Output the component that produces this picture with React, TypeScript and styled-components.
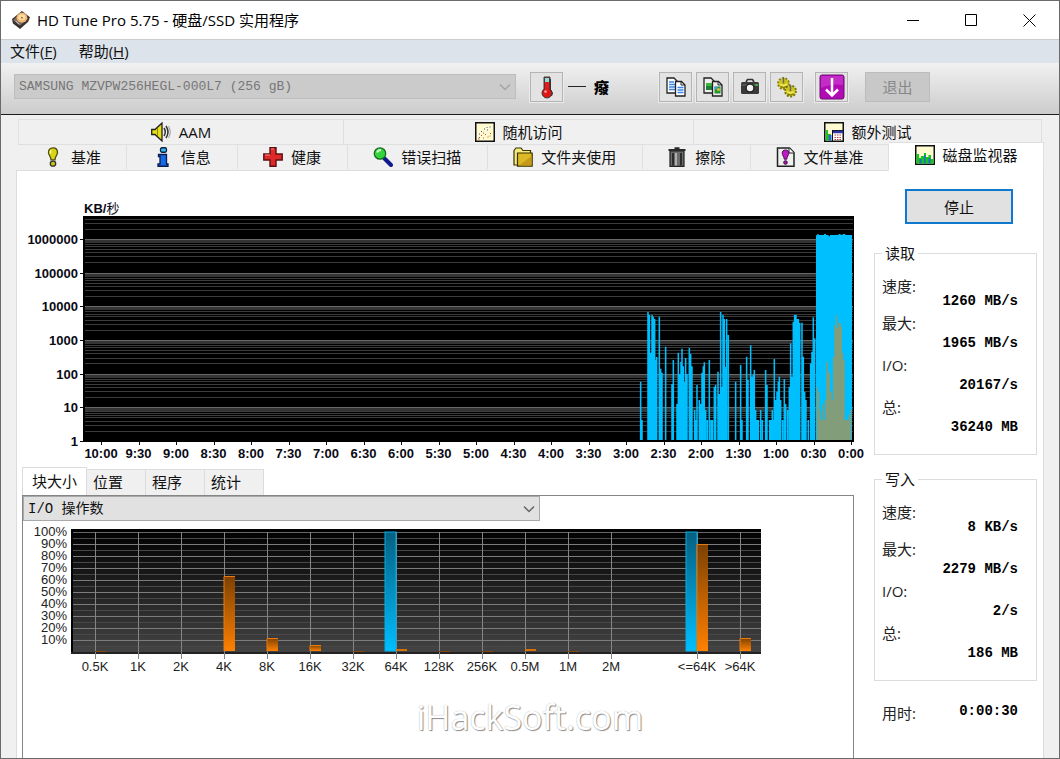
import React from "react";
import styled, { createGlobalStyle } from "styled-components";

const ui = `"Open Sans", "Noto Sans CJK SC", sans-serif`;
const mono = `"Liberation Mono", "Noto Sans CJK SC", monospace`;
const chartFont = `"Liberation Sans", "Noto Sans CJK SC", sans-serif`;

const GlobalStyle = createGlobalStyle`
  * { box-sizing: border-box; }
  body { margin: 0; background: #fff; }
  button, select { font: inherit; color: inherit; padding: 0; margin: 0; border-radius: 0; }
`;

const Window = styled.div`
  position: relative;
  display: flex;
  flex-direction: column;
  min-height: 100vh;
  border: 1px solid #6a6a6a;
  background: #f0f0f0;
  font: 15px/20px ${ui};
  color: #111;
`;

const TitleBar = styled.header`
  display: flex;
  align-items: center;
  height: 39px;
  padding: 0 1px 0 11px;
  background: #fff;
  border-bottom: 1px solid #c9cdd0;
`;

const Title = styled.h1`
  flex: 1;
  margin: 0 0 0 7px;
  font-size: 15px;
  font-weight: 400;
  line-height: 20px;
  color: #000;
`;

const WindowButton = styled.button`
  display: grid;
  place-items: center;
  width: 58px;
  height: 38px;
  border: 0;
  background: none;
`;

const MenuBar = styled.nav`
  display: flex;
  align-items: flex-start;
  gap: 22px;
  height: 23px;
  padding-left: 9px;
  background: #dce3eb;
`;

const MenuItem = styled.button`
  border: 0;
  background: none;
  line-height: 22px;
`;

const Toolbar = styled.div`
  display: flex;
  align-items: center;
  height: 52px;
  padding: 0 13px 4px;
  background: linear-gradient(#f1f1f1, #cccccc);
  border-bottom: 1px solid #1c1c1c;
`;

const SelectBox = styled.div<{ $width: number; $disabled?: boolean }>`
  position: relative;
  flex: 0 1 ${(p) => p.$width}px;
  max-width: ${(p) => p.$width}px;
  height: 25px;

  select {
    display: block;
    width: 100%;
    height: 100%;
    padding: 0 24px 0 4px;
    appearance: none;
    border: 1px solid ${(p) => (p.$disabled ? "#bdbdbd" : "#a9a9a9")};
    background: ${(p) => (p.$disabled ? "#cbcbcb" : "#e1e1e1")};
    color: ${(p) => (p.$disabled ? "#767676" : "#111")};
    opacity: 1;
    font: ${(p) => (p.$disabled ? 13 : 14)}px/22px ${mono};
  }

  svg {
    position: absolute;
    top: 9px;
    right: 5px;
    pointer-events: none;
    color: ${(p) => (p.$disabled ? "#a5a5a5" : "#666")};
  }
`;

const ToolGroup = styled.div<{ $before: number }>`
  display: flex;
  flex: none;
  gap: 4px;
  margin-left: ${(p) => p.$before}px;
`;

const ToolButton = styled.button`
  display: grid;
  place-items: center;
  width: 33px;
  height: 30px;
  border: 1px solid #b4b4b4;
  outline: 1px solid #ebebeb;
  background: #e3e3e3;
`;

const Temperature = styled.output`
  flex: none;
  display: flex;
  align-items: center;
  gap: 8px;
  width: 90px;
  margin-left: 5px;
  font-weight: 900;
  color: #000;
`;

const Dash = styled.span`
  width: 18px;
  height: 1px;
  background: #222;
`;

const ExitButton = styled.button`
  flex: none;
  width: 65px;
  height: 30px;
  margin-left: 17px;
  border: 1px solid #bcbcbc;
  background: #c8c8c8;
  color: #888;
`;

const Workspace = styled.main`
  display: flex;
  flex: 1;
  flex-direction: column;
  padding: 4px 15px 0;
`;

const BackTabs = styled.div`
  display: flex;
  height: 25px;
  margin: 0 2px;
  border-left: 1px solid #e2e2e2;
`;

const FrontTabs = styled.div`
  display: flex;
  align-items: flex-start;
  height: 26px;
  padding-left: 2px;
`;

const Tab = styled.button<{ $share: number; $active?: boolean }>`
  display: flex;
  align-items: center;
  justify-content: center;
  gap: 8px;
  flex: ${(p) => p.$share} 1 0;
  min-width: 0;
  white-space: nowrap;
  height: ${(p) => (p.$active ? 29 : 25)}px;
  margin-top: ${(p) => (p.$active ? -2 : 0)}px;
  padding-bottom: ${(p) => (p.$active ? 5 : 0)}px;
  border: solid #dfdfdf;
  border-width: 1px 1px 0 0;
  background: ${(p) => (p.$active ? "#fff" : "#f0f0f0")};
  z-index: ${(p) => (p.$active ? 1 : 0)};

  svg { flex: none; }
`;

const Panel = styled.section`
  display: flex;
  flex: 1;
  gap: 20px;
  padding: 0 6px 0 5px;
  border: 1px solid #dcdcdc;
  border-bottom: 0;
  background: #fff;
`;

const Main = styled.div`
  display: flex;
  flex: 1;
  flex-direction: column;
  min-width: 0;
  padding-top: 27px;
`;

const Chart = styled.svg`
  display: block;
  width: 100%;
  height: auto;
  overflow: visible;
  font-family: ${chartFont};
  font-size: 13px;
`;

const SubTabs = styled.div`
  display: flex;
  align-items: flex-end;
  margin-top: 7px;
  height: 28px;
`;

const SubTab = styled.button<{ $active?: boolean }>`
  width: ${(p) => (p.$active ? 65 : 59)}px;
  height: ${(p) => (p.$active ? 28 : 26)}px;
  padding: 0 0 1px ${(p) => (p.$active ? 9 : 6)}px;
  text-align: left;
  border: 1px solid #dcdcdc;
  border-left-width: ${(p) => (p.$active ? 1 : 0)}px;
  border-bottom: 0;
  background: ${(p) => (p.$active ? "#fff" : "#f0f0f0")};
`;

const BlockBox = styled.div`
  flex: 1;
  min-height: 240px;
  border: solid #868686;
  border-width: 1px 1px 0;
`;

const Sidebar = styled.aside`
  flex: none;
  width: 163px;
  padding-top: 18px;
`;

const StopButton = styled.button`
  display: block;
  width: 108px;
  height: 35px;
  margin-left: 31px;
  margin-bottom: 19px;
  border: 2px solid #0f78cf;
  background: #e1e1e1;
`;

const Group = styled.fieldset`
  margin: 0 0 14px;
  min-width: 0;
  padding: 13px 18px 15px 7px;
  border: 1px solid #dcdcdc;
`;

const Legend = styled.legend`
  padding: 0 3px;
`;

const Stats = styled.dl`
  display: grid;
  grid-template-rows: 37px 42px 42px 42px;
  margin: 0;
`;

const Stat = styled.div`
  display: flex;
  justify-content: space-between;
`;

const StatLabel = styled.dt`
  color: #222;
`;

const StatValue = styled.dd`
  align-self: flex-end;
  margin: 0;
  font: bold 14px/24px ${mono};
  color: #000;
`;

const Elapsed = styled.dl`
  display: flex;
  justify-content: space-between;
  margin: 22px 0 0;
  padding: 0 19px 0 8px;
`;

const ElapsedValue = styled.dd`
  margin: 0;
  font: bold 14px/16px ${mono};
  color: #000;
`;

const Watermark = styled.div`
  position: absolute;
  right: 0;
  bottom: 21px;
  left: 0;
  text-align: center;
  pointer-events: none;
  font: 34px/40px ${ui};
  color: #fff;
  text-shadow: 1px 1px 1px #8a8a8a, 0 0 1px #a8a8a8;
`;

const Icon = ({ size = 20, box = 20, children }: { size?: number; box?: number; children: React.ReactNode }) => (
  <svg width={size} height={size} viewBox={`0 0 ${box} ${box}`} aria-hidden="true">{children}</svg>
);

const Chevron = () => (
  <svg width="12" height="8" viewBox="0 0 12 8" fill="none" stroke="currentColor" strokeWidth="1.5" aria-hidden="true">
    <path d="M1 1.5 6 6.5 11 1.5" />
  </svg>
);

const icons = {
  app: (
    <Icon size={18}>
      <path d="M0 9 11 0 20 7 18 12 9 20 1 14z" fill="#3a3230" />
      <path d="M1 10 11 1 18 8 9 16z" fill="#7d6a64" />
      <ellipse cx="11" cy="7.5" rx="6" ry="5.5" fill="#eeb56c" />
      <ellipse cx="11" cy="7" rx="4" ry="3.5" fill="#ffdca6" />
      <circle cx="11" cy="7.5" r="1.2" fill="#b27a3c" />
      <path d="M4 11 8 15" stroke="#eee" />
    </Icon>
  ),
  thermo: (
    <Icon size={24} box={24}>
      <path d="M9 2h6v12a5 5 0 1 1-6 0z" fill="#8b1414" stroke="#444" />
      <path d="M10 3h4v4h-4z" fill="#7fe3e0" />
      <path d="M10 7h4v8h-4z" fill="#e31b1b" />
      <circle cx="12" cy="18" r="4.2" fill="#e01515" />
      <circle cx="10.5" cy="16.6" r="1.3" fill="#ff9c9c" />
      <path d="M15.5 4v11l2 3-1 3" stroke="#333" fill="none" />
    </Icon>
  ),
  copyText: (
    <Icon size={22} box={22}>
      <path d="M2 2h7l3 3v12H2z" fill="#fff" stroke="#222" strokeWidth="1.3" />
      <path d="M4 6h5M4 8.5h6M4 11h6M4 13.5h6" stroke="#3a86e8" strokeWidth="1.3" />
      <path d="M10.5 5.5h6l3.5 3.5v11H10.5z" fill="#fff" stroke="#222" strokeWidth="1.3" />
      <path d="M16 5.5V9h4" fill="none" stroke="#222" />
      <path d="M12.5 11.5h6M12.5 14h6M12.5 16.5h6" stroke="#3a86e8" strokeWidth="1.3" />
    </Icon>
  ),
  copyImage: (
    <Icon size={22} box={22}>
      <path d="M2 2h7l3 3v12H2z" fill="#eee" stroke="#222" strokeWidth="1.3" />
      <path d="M4 7h6v7H4z" fill="#3bb637" />
      <path d="M4 10h6v4H4z" fill="#1c7f3a" />
      <path d="M10.5 5.5h6l3.5 3.5v11H10.5z" fill="#eee" stroke="#222" strokeWidth="1.3" />
      <path d="M16 5.5V9h4" fill="none" stroke="#222" />
      <path d="M12.5 10.5h6v7h-6z" fill="#25962f" />
      <path d="M12.5 10.5h3v3h-3z" fill="#4a9be0" />
      <circle cx="16.5" cy="13.5" r="1.5" fill="#d8c42a" />
    </Icon>
  ),
  camera: (
    <Icon size={22} box={22}>
      <path d="M7 6 8.5 3.5h5L15 6" fill="none" stroke="#333" strokeWidth="1.6" />
      <rect x="2" y="6" width="18" height="12" rx="1.5" fill="#3a3a3a" />
      <path d="M2 9h18" stroke="#666" />
      <circle cx="11" cy="12" r="4.5" fill="#222" />
      <circle cx="11" cy="12" r="3.2" fill="#f4f4f4" />
      <rect x="16.5" y="8" width="2" height="2" fill="#2fd03a" />
    </Icon>
  ),
  gears: (
    <Icon size={22} box={22}>
      <circle cx="7.5" cy="7.5" r="5.2" fill="#cfc51a" />
      <circle cx="7.5" cy="7.5" r="5.5" fill="none" stroke="#8a8208" strokeWidth="1.8" strokeDasharray="2 1.4" />
      <circle cx="14.5" cy="15" r="5.2" fill="#cfc51a" />
      <circle cx="14.5" cy="15" r="5.5" fill="none" stroke="#7a7204" strokeWidth="1.8" strokeDasharray="2 1.4" />
      <path d="M7.500 1.500v6M14.500 9v6" stroke="#666" strokeWidth="1.500" />
      <path d="M4 8q3.500 3 7 0M11 15.500q3.500 3 7 0" stroke="#f2ee6a" strokeWidth="1.500" fill="none" />
      <path d="M4.500 10.500q3 2 6 0M11.500 18q3 2 6 0" stroke="#6c6500" fill="none" />
    </Icon>
  ),
  download: (
    <Icon size={26} box={26}>
      <rect x="1" y="1" width="24" height="24" rx="2" fill="#b10cb4" stroke="#6f0a74" />
      <path d="M2 2h22v9Q12 9 2 14z" fill="#c32cc6" />
      <path d="M13 4v17M7 15.5l6 6 6-6" fill="none" stroke="#fff" strokeWidth="2.5" />
    </Icon>
  ),
  speaker: (
    <Icon>
      <path d="M.7 7.5H4L11 1v18L4 12.500H.7z" fill="#e6e014" stroke="#222" strokeWidth="1.3" />
      <path d="M6.500 6v8" stroke="#8c8600" />
      <path d="M13 6q2.500 4 0 8M15 4q4 6 0 12" fill="none" stroke="#333" strokeWidth="1.500" />
      <path d="M17.500 4q3.500 6 0 12" fill="none" stroke="#999" />
    </Icon>
  ),
  random: (
    <Icon>
      <rect x=".75" y=".75" width="18.5" height="18.5" fill="#fffbd0" stroke="#111" strokeWidth="1.5" />
      <path d="M4 12h1M6 9.500h1M9 7h1M12 8h1M14.500 5h1M11.500 5.500h1M4 15.500h1" stroke="#3b56a8" strokeWidth="1.200" />
      <path d="M3 17h1.500M6 13.500h1M8 16h1M10 12.500h1M12.500 15h1M15 11.500h1M14.500 14h1M8 11h1" stroke="#dd4b2a" strokeWidth="1.200" />
    </Icon>
  ),
  extra: (
    <Icon>
      <rect x=".75" y=".75" width="18.5" height="18.5" fill="#fffbd0" stroke="#111" strokeWidth="1.5" />
      <path d="M2 18.5V8h2v4h3v6.5z" fill="#1fc51f" />
      <path d="M4.5 18.5V13h3v5.500z" fill="#2667d8" />
      <rect x="8.5" y="8.5" width="10.5" height="10.5" fill="#fff" stroke="#111" />
      <path d="M9 10h10" stroke="#2f35a8" strokeWidth="2.5" />
      <path d="M10.5 13h7M10.5 15.5h7M10.5 17.5h7" stroke="#c23b3b" strokeDasharray="1.5 1" />
    </Icon>
  ),
  bulb: (
    <Icon>
      <path d="M10 .8c3 0 4.5 2 4.5 4.500 0 3-2.500 4-2.500 7.500H8c0-3.500-2.500-4.500-2.500-7.500C5.500 2.800 7 .8 10 .8z" fill="#d9d414" stroke="#4b4a10" strokeWidth="1.3" />
      <path d="M8 3.5q-1 1-.5 3" stroke="#fffdb5" strokeWidth="1.5" fill="none" />
      <ellipse cx="10" cy="16.7" rx="2.7" ry="2.5" fill="#c9c40f" stroke="#333" strokeWidth="1.3" />
    </Icon>
  ),
  info: (
    <Icon>
      <rect x="7.500" y=".75" width="6" height="4.500" rx="1.500" fill="#33b7ee" stroke="#0d2140" strokeWidth="1.3" />
      <path d="M5.500 7.500h8V17H15v2.250H5V17h2v-7.500H5.500z" fill="#176ae6" stroke="#0a1a50" strokeWidth="1.3" />
    </Icon>
  ),
  cross: (
    <Icon>
      <path d="M7 .8h6V7h6.200v6H13v6.200H7V13H.8V7H7z" fill="#e02828" stroke="#5c1010" strokeWidth="1.4" />
      <path d="M8 2h3M2 8h5" stroke="#ff8a8a" />
    </Icon>
  ),
  magnifier: (
    <Icon>
      <path d="M11.5 11.5 18 18" stroke="#101a8c" strokeWidth="4" strokeLinecap="round" />
      <circle cx="7" cy="6.5" r="5.7" fill="#35d43c" stroke="#176b1c" strokeWidth="1.3" />
      <path d="M4 5.5q1-2.500 4-2.500" stroke="#d8ffd8" strokeWidth="1.8" fill="none" />
    </Icon>
  ),
  folder: (
    <Icon>
      <path d="M1 3.5 3 1h5l2 2.500h7.500V16L16 18H1z" fill="#f2ea7c" stroke="#3a3200" strokeWidth="1.2" />
      <path d="M4.500 6h14.700v13.200H4.500z" fill="#dcb926" stroke="#3a3200" strokeWidth="1.2" />
      <path d="M6 18.500 18.500 9v9.500z" fill="#c6991a" />
    </Icon>
  ),
  trash: (
    <Icon>
      <path d="M3 4h14v15.300H3z" fill="#6c6c6c" stroke="#222" strokeWidth="1.2" />
      <path d="M6 6v12.500M14 6v12.500" stroke="#2c2c2c" strokeWidth="2" />
      <path d="M9 6v12.500" stroke="#c4c4c4" strokeWidth="1.500" />
      <path d="M1.500 3h17M7.500 1.200h5" stroke="#2a2a2a" strokeWidth="2" />
    </Icon>
  ),
  fileBench: (
    <Icon>
      <path d="M1.500 1h12l4.500 4.500v13.700H1.500z" fill="#efefef" stroke="#222" strokeWidth="1.5" />
      <path d="M13 1v5h5" fill="#fff" stroke="#222" />
      <path d="M9.500 3c2.300 0 3.300 1.500 3.300 3.200 0 2.300-2 3-2 6H8.200c0-3-2-3.700-2-6C6.200 4.500 7.200 3 9.500 3z" fill="#c01ac8" stroke="#4b0c52" />
      <circle cx="9.500" cy="15.500" r="1.800" fill="#a514ad" stroke="#3a0a40" />
    </Icon>
  ),
  monitor: (
    <Icon>
      <rect x=".75" y=".75" width="18.5" height="18.5" fill="#fffbd0" stroke="#111" strokeWidth="1.5" />
      <path d="M1.500 18.500V9H4v4h2v-2h3V8h2v4h2.500v-2H16v4h2.500v4.500z" fill="#17c51f" />
      <path d="M4.500 18.500V14h2v4.500zM9 18.500V10h1.500v8.500zM13.500 18.500V13h2v5.500z" fill="#2667d8" />
    </Icon>
  ),
};

const backTabs = [
  { label: "AAM", icon: icons.speaker, share: 325 },
  { label: "随机访问", icon: icons.random, share: 350 },
  { label: "额外测试", icon: icons.extra, share: 348 },
];

const frontTabs = [
  { label: "基准", icon: icons.bulb, share: 109 },
  { label: "信息", icon: icons.info, share: 110 },
  { label: "健康", icon: icons.cross, share: 110 },
  { label: "错误扫描", icon: icons.magnifier, share: 140 },
  { label: "文件夹使用", icon: icons.folder, share: 155 },
  { label: "擦除", icon: icons.trash, share: 108 },
  { label: "文件基准", icon: icons.fileBench, share: 138 },
  { label: "磁盘监视器", icon: icons.monitor, share: 155, active: true },
];

const tools = [
  { label: "复制文本", icon: icons.copyText },
  { label: "复制图像", icon: icons.copyImage },
  { label: "截图", icon: icons.camera },
  { label: "选项", icon: icons.gears },
];

/* Throughput samples: [position, top], three units to the pixel. */
const samples: number[][] = [
  [122, 545], [126, 660], [144, 336], [148, 345], [152, 458], [156, 345], [160, 350], [164, 357], [167, 480],
  [170, 471], [178, 350], [182, 506], [186, 518], [197, 440], [216, 552], [220, 480], [231, 612], [235, 458],
  [239, 522], [243, 485], [246, 446], [250, 499], [253, 545], [257, 474], [261, 522], [268, 444], [272, 462],
  [276, 499], [284, 630], [288, 660], [291, 555], [298, 600], [302, 612], [306, 518], [310, 499], [313, 487],
  [317, 630], [322, 660], [328, 480], [333, 660], [337, 660], [343, 560], [347, 555], [354, 515], [358, 582],
  [362, 336], [366, 560], [369, 345], [373, 357], [377, 500], [380, 357], [385, 405], [407, 545], [422, 495],
  [426, 660], [440, 470], [444, 540], [452, 436], [456, 530], [460, 525], [463, 510], [467, 630], [471, 660],
  [475, 660], [482, 630], [487, 660], [497, 510], [501, 555], [509, 660], [513, 660], [517, 630], [520, 660],
  [523, 477], [527, 600], [531, 575], [535, 545], [538, 530], [542, 600], [548, 660], [553, 537], [557, 612],
  [563, 630], [568, 560], [572, 430], [576, 530], [580, 365], [584, 345], [588, 345], [592, 357], [595, 357],
  [599, 368], [606, 368], [610, 470], [614, 575], [618, 600], [625, 660], [632, 490], [636, 455], [640, 352],
  [644, 415],
];

const readPath = samples.map(([x, top]) => `M${x} 720V${top}`).join("");
const times = ["10:00", "9:30", "9:00", "8:30", "8:00", "7:30", "7:00", "6:30", "6:00", "5:30", "5:00", "4:30",
  "4:00", "3:30", "3:00", "2:30", "2:00", "1:30", "1:00", "0:30", "0:00"];

const decadeY = (value: number) => Math.round(243 - 33.7 * Math.log10(value));

const SpeedChart = () => {
  const minors: number[] = [];
  for (let d = 0; d < 7; d++) {
    for (let m = 2; m < 10; m++) {
      const y = decadeY(m * 10 ** d);
      if (y > 19) minors.push(y);
    }
  }
  const decades = [0, 1, 2, 3, 4, 5, 6];
  return (
    <Chart viewBox="0 0 832 262" role="img" aria-label="磁盘速度">
      <rect x="61" y="18" width="771" height="226" fill="#000" />
      {minors.map((y) => <rect key={y} x="63" y={y} width="768" height="1" fill="#3c3c3c" />)}
      {decades.slice(1).map((d) => (
        <g key={d}>
          <rect x="63" y={decadeY(10 ** d)} width="768" height="4" fill="#343434" />
          <rect x="63" y={decadeY(10 ** d)} width="768" height="1" fill="#686868" />
        </g>
      ))}
      <g transform="translate(578 2) scale(.3333)">
        <path d={readPath} stroke="#00bfff" strokeWidth="4.6" />
        <path d="M648 720V106h4v-4h4v3h16v-3h6v3h8v4h4v-4h26v-3h6v3h6v-3h8v3h20v615z" fill="#00bfff" />
        <path
          d="M650 720V560h4v15h4v55h4v30h5v-48h4v48h4v-60h4V485h5v33h6v57h5v25h4V470h4v-95h4v-30h4v40h4v-17h7v12h4v80h4v20h4v180h12v-15h4v-15h4v90z"
          fill="#829d7a"
        />
      </g>
      <g fontWeight="700" fill="#0a0a14">
        <text x="62" y="15">KB/<tspan fontWeight="400">秒</tspan></text>
        {decades.map((d) => (
          <g key={d}>
            <rect x="58" y={decadeY(10 ** d)} width="3" height="1" />
            <text x="56" y={decadeY(10 ** d) + 5} textAnchor="end">{10 ** d}</text>
          </g>
        ))}
        {times.map((t, i) => (
          <g key={t}>
            <rect x={Math.round(79 + 37.5 * i)} y="244" width="1" height="3" />
            <text x={79 + 37.5 * i} y="260" textAnchor="middle">{t}</text>
          </g>
        ))}
      </g>
    </Chart>
  );
};

/* Block sizes: column index, label, and the tops of the read and write bars. */
const blocks: { at: number; label: string; read?: number; write?: number }[] = [
  { at: 0, label: "0.5K", write: 130 },
  { at: 1, label: "1K" },
  { at: 2, label: "2K" },
  { at: 3, label: "4K", write: 55 },
  { at: 4, label: "8K", write: 117 },
  { at: 5, label: "16K", write: 124 },
  { at: 6, label: "32K", write: 130 },
  { at: 7, label: "64K", read: 11, write: 128 },
  { at: 8, label: "128K", write: 130 },
  { at: 9, label: "256K", write: 130 },
  { at: 10, label: "0.5M", write: 128 },
  { at: 11, label: "1M", write: 130 },
  { at: 12, label: "2M" },
  { at: 14, label: "<=64K", read: 11, write: 23 },
  { at: 15, label: ">64K", write: 117 },
];

const BlockChart = () => (
  <Chart viewBox="0 0 830 160" role="img" aria-label="块大小">
    <defs>
      <linearGradient id="plot" x2="0" y2="1">
        <stop offset="0" stopColor="#000" />
        <stop offset="1" stopColor="#444" />
      </linearGradient>
      <linearGradient id="read" x2="0" y2="1">
        <stop offset="0" stopColor="#065f80" />
        <stop offset="1" stopColor="#00bfff" />
      </linearGradient>
      <linearGradient id="write" x2="0" y2="1">
        <stop offset="0" stopColor="#7c4103" />
        <stop offset="1" stopColor="#ff8000" />
      </linearGradient>
    </defs>
    <rect x="48" y="8" width="690" height="125" fill="url(#plot)" />
    <rect x="48" y="8" width="2" height="125" fill="#000" />
    <rect x="48" y="131" width="690" height="2" fill="#222" />
    {Array.from({ length: 10 }, (_, i) => (
      <g key={i}>
        <rect x="50" y={11 + 12 * i} width="688" height="1" fill={i ? "#7c7c7c" : "#666"} />
        <rect x="50" y={17 + 12 * i} width="688" height="1" fill="#484848" />
        <text x="44" y={15 + 12 * i} textAnchor="end" fill="#222">{100 - 10 * i}%</text>
      </g>
    ))}
    {blocks.map(({ at, label, read, write }) => {
      const x = 72 + 43 * at;
      return (
        <g key={label}>
          <rect x={x} y="11" width="1" height="127" fill="#858585" />
          {read && <rect x={x - 11} y={read} width="11" height={130 - read} fill="url(#read)" stroke="#00aee8" strokeWidth="1" />}
          {write && write < 128 && (
            <>
              <rect x={x} y={write} width="11" height={130 - write} fill="url(#write)" />
              <path d={`M${x} 130V${write + 0.5}h11`} stroke="#e87a0c" fill="none" />
            </>
          )}
          {write && write >= 128 && <rect x={x} y={write} width="11" height={write === 128 ? 2 : 1} fill={write === 128 ? "#d87008" : "#85460a"} />}
          <text x={x} y="150" textAnchor="middle" fill="#222">{label}</text>
        </g>
      );
    })}
  </Chart>
);

const StatGroup = ({ title, values }: { title: string; values: string[] }) => (
  <Group>
    <Legend>{title}</Legend>
    <Stats>
      {["速度:", "最大:", "I/O:", "总:"].map((label, i) => (
        <Stat key={label}>
          <StatLabel>{label}</StatLabel>
          <StatValue>{values[i]}</StatValue>
        </Stat>
      ))}
    </Stats>
  </Group>
);

export default function App() {
  return (
    <>
      <GlobalStyle />
      <Window>
        <TitleBar>
          {icons.app}
          <Title>HD Tune Pro 5.75 - 硬盘/SSD 实用程序</Title>
          <WindowButton aria-label="最小化">
            <svg width="13" height="13"><path d="M0 6.5h12" stroke="#000" /></svg>
          </WindowButton>
          <WindowButton aria-label="最大化">
            <svg width="13" height="13"><path d="M.5.5h11v11H.5z" fill="none" stroke="#000" /></svg>
          </WindowButton>
          <WindowButton aria-label="关闭">
            <svg width="13" height="13"><path d="m.5.5 12 12m0-12-12 12" stroke="#000" /></svg>
          </WindowButton>
        </TitleBar>
        <MenuBar>
          <MenuItem>文件(<u>F</u>)</MenuItem>
          <MenuItem>帮助(<u>H</u>)</MenuItem>
        </MenuBar>
        <Toolbar>
          <SelectBox $width={502} $disabled>
            <select disabled aria-label="驱动器">
              <option>SAMSUNG MZVPW256HEGL-000L7 (256 gB)</option>
            </select>
            <Chevron />
          </SelectBox>
          <ToolGroup $before={14}>
            <ToolButton aria-label="温度">{icons.thermo}</ToolButton>
          </ToolGroup>
          <Temperature><Dash />癈</Temperature>
          <ToolGroup $before={1}>
            {tools.map((t) => <ToolButton key={t.label} aria-label={t.label}>{t.icon}</ToolButton>)}
          </ToolGroup>
          <ToolGroup $before={12}>
            <ToolButton aria-label="保存">{icons.download}</ToolButton>
          </ToolGroup>
          <ExitButton disabled>退出</ExitButton>
        </Toolbar>
        <Workspace>
          <BackTabs role="tablist">
            {backTabs.map((t) => (
              <Tab key={t.label} role="tab" $share={t.share}>{t.icon}{t.label}</Tab>
            ))}
          </BackTabs>
          <FrontTabs role="tablist">
            {frontTabs.map((t) => (
              <Tab key={t.label} role="tab" aria-selected={!!t.active} $share={t.share} $active={t.active}>
                {t.icon}{t.label}
              </Tab>
            ))}
          </FrontTabs>
          <Panel>
            <Main>
              <SpeedChart />
              <SubTabs role="tablist">
                <SubTab role="tab" aria-selected $active>块大小</SubTab>
                <SubTab role="tab">位置</SubTab>
                <SubTab role="tab">程序</SubTab>
                <SubTab role="tab">统计</SubTab>
              </SubTabs>
              <BlockBox>
                <SelectBox $width={517}>
                  <select aria-label="图表数据">
                    <option>I/O 操作数</option>
                  </select>
                  <Chevron />
                </SelectBox>
                <BlockChart />
              </BlockBox>
            </Main>
            <Sidebar>
              <StopButton>停止</StopButton>
              <StatGroup title="读取" values={["1260 MB/s", "1965 MB/s", "20167/s", "36240 MB"]} />
              <StatGroup title="写入" values={["8 KB/s", "2279 MB/s", "2/s", "186 MB"]} />
              <Elapsed>
                <StatLabel>用时:</StatLabel>
                <ElapsedValue>0:00:30</ElapsedValue>
              </Elapsed>
            </Sidebar>
          </Panel>
        </Workspace>
        <Watermark>iHackSoft.com</Watermark>
      </Window>
    </>
  );
}
